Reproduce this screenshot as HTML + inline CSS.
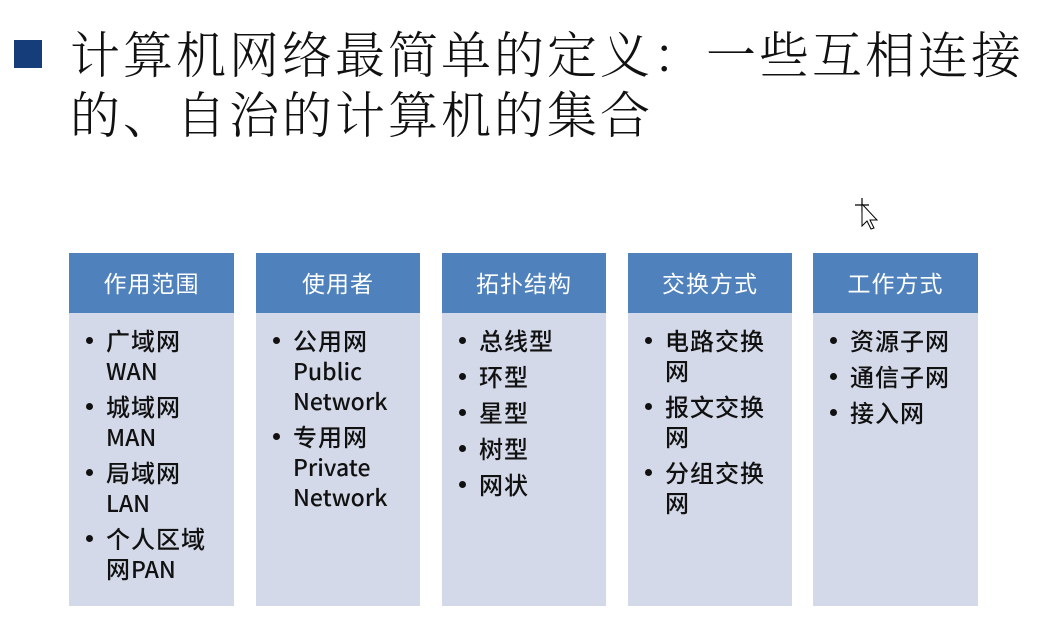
<!DOCTYPE html>
<html><head><meta charset="utf-8"><style>
body{margin:0;width:1041px;height:629px;background:#fff;position:relative;overflow:hidden;font-family:"Liberation Sans","Noto Sans CJK SC",sans-serif}
.sq{position:absolute;left:14px;top:40px;width:28px;height:28px;background:#153d7a}
.t{position:absolute;left:70px;font-family:"Noto Serif CJK SC","WenQuanYi Zen Hei",serif;font-weight:300;font-size:50px;letter-spacing:3px;color:#111;line-height:60px;white-space:nowrap}
.col{position:absolute;top:253px;width:165px;height:353px;background:#d3d9e8}
.h{height:60px;background:#4f81bd;color:#fff;font-size:23px;letter-spacing:1px;text-align:center;line-height:58px;font-family:"Noto Sans CJK SC",sans-serif}
ul{list-style:none;margin:0;padding:12px 0 0 0}
li{position:relative;padding-left:37px;font-size:24px;letter-spacing:1px;line-height:30px;margin-bottom:6px;color:#111;font-weight:500;font-family:"Noto Sans CJK SC","Liberation Sans",sans-serif}
li span{letter-spacing:0;font-size:23px}
li:before{content:"";position:absolute;left:17px;top:12px;width:7px;height:7px;border-radius:50%;background:#111}
</style></head><body>
<div class="sq"></div>
<div class="t" style="top:22px">计算机网络最简单的定义：一些互相连接</div>
<div class="t" style="top:82px">的、自治的计算机的集合</div>
<svg style="position:absolute;left:850px;top:196px" width="30" height="40" viewBox="0 0 30 40"><path d="M12 2v14M5 9h14" stroke="#000" stroke-width="1.2"/><path d="M12 8l0 22 5-5 4 8 3-1-4-8 7 0z" fill="#fff" stroke="#000" stroke-width="1"/></svg>
<div class="col" style="left:69px"><div class="h">作用范围</div><ul>
<li>广域网<br><span>WAN</span></li><li>城域网<br><span>MAN</span></li><li>局域网<br><span>LAN</span></li><li>个人区域<br>网<span>PAN</span></li></ul></div>
<div class="col" style="left:256px;width:164px"><div class="h">使用者</div><ul>
<li>公用网<br><span>Public<br>Network</span></li><li>专用网<br><span>Private<br>Network</span></li></ul></div>
<div class="col" style="left:442px;width:164px"><div class="h">拓扑结构</div><ul>
<li>总线型</li><li>环型</li><li>星型</li><li>树型</li><li>网状</li></ul></div>
<div class="col" style="left:628px;width:164px"><div class="h">交换方式</div><ul>
<li>电路交换<br>网</li><li>报文交换<br>网</li><li>分组交换<br>网</li></ul></div>
<div class="col" style="left:813px"><div class="h">工作方式</div><ul>
<li>资源子网</li><li>通信子网</li><li>接入网</li></ul></div>
</body></html>
